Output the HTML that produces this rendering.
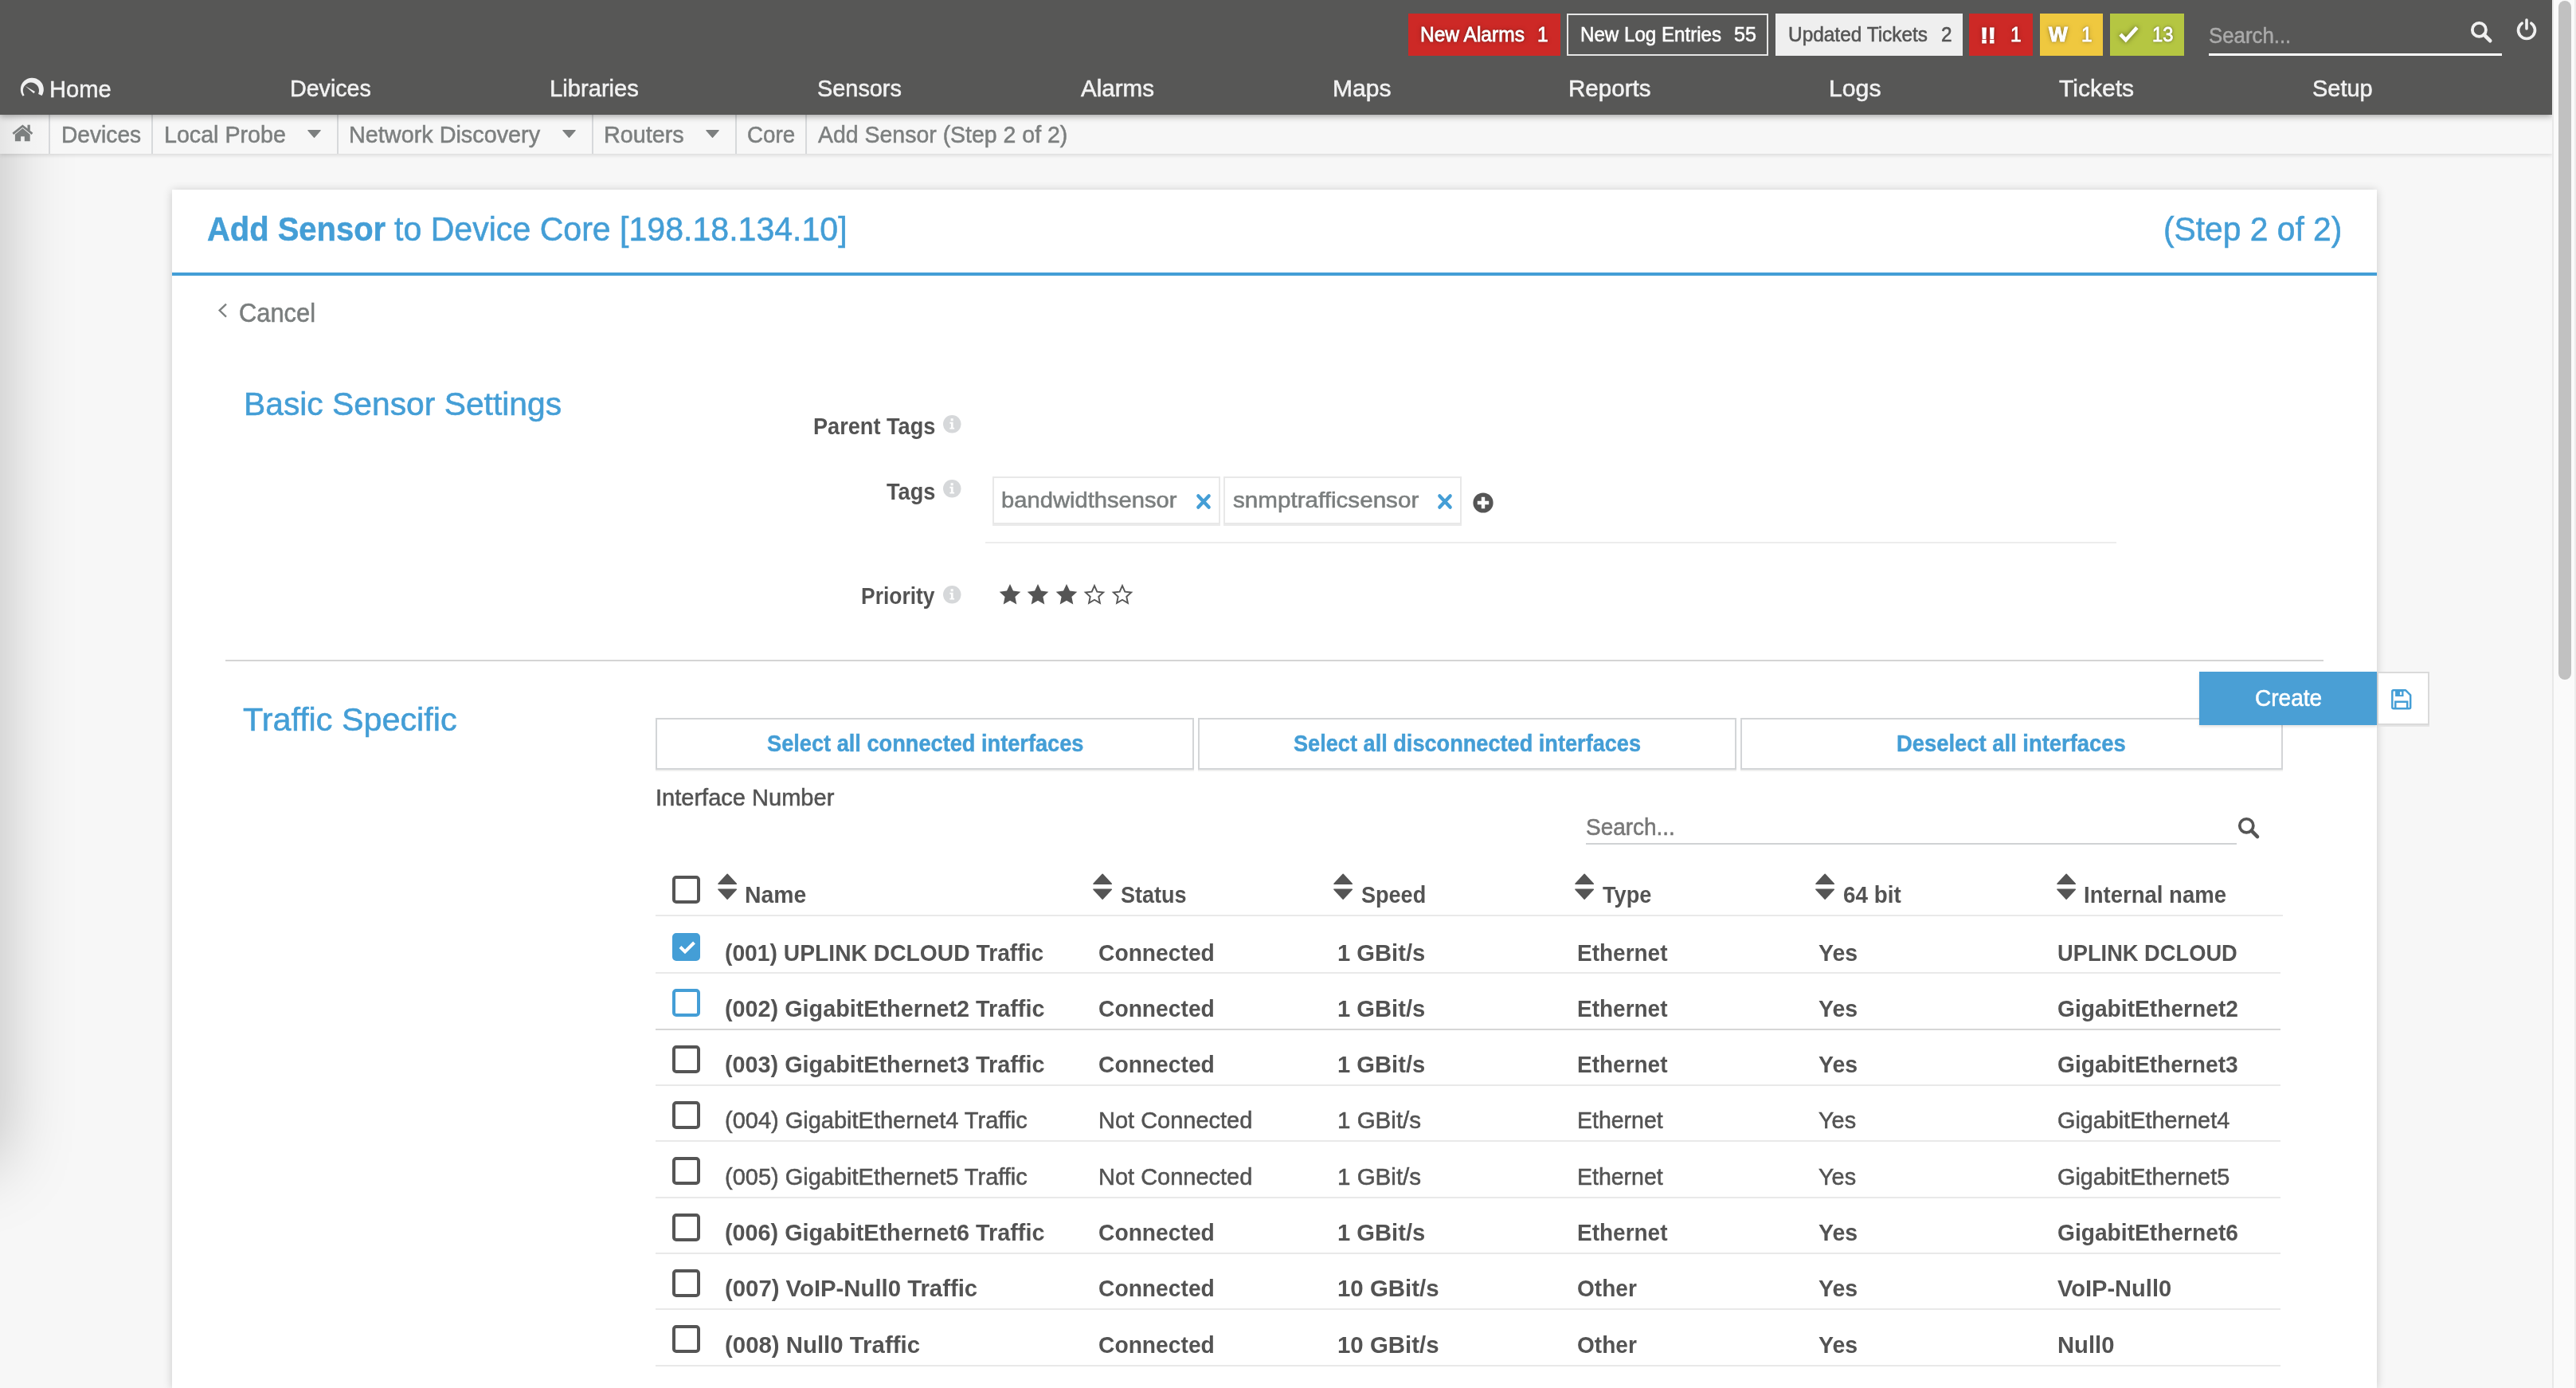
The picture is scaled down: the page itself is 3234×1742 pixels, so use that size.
<!DOCTYPE html>
<html lang="en"><head><meta charset="utf-8"><title>Add Sensor | PRTG Network Monitor</title>
<style>
html,body{margin:0;padding:0;overflow:hidden}
html{width:3234px;height:1742px}
body{width:3234px;height:1742px;overflow:hidden;position:relative;background:#f7f7f7;font-family:"Liberation Sans",sans-serif}
.t{position:absolute;white-space:pre;line-height:1;transform-origin:0 0;font-family:"Liberation Sans",sans-serif}
.a{position:absolute}
#leftshade{left:-200px;top:-100px;width:200px;height:1560px;box-shadow:0 0 90px rgba(0,0,0,.25)}
#hdr{left:0;top:0;width:3204px;height:144px;background:#575756;box-shadow:0 2px 8px rgba(0,0,0,.35)}
#crumbs{left:0;top:144px;width:3204px;height:49px;background:linear-gradient(to right,rgba(0,0,0,.07),rgba(0,0,0,.025) 30px,rgba(0,0,0,0) 70px) #f7f7f7;box-shadow:0 2px 5px rgba(0,0,0,.12)}
.sep{position:absolute;top:144px;width:2px;height:49px;background:#d7d9db}
#sb{left:3204px;top:0;width:26px;height:1742px;background:#fafafa;border-left:2px solid #e8e8e8;border-right:2px solid #ececec}
#thumb{left:3212px;top:1px;width:16px;height:852px;border-radius:8px;background:#c1c1c1}
#card{left:216px;top:238px;width:2768px;height:1504px;background:#fff;box-shadow:0 1px 11px rgba(0,0,0,.19)}
#blueline{left:216px;top:342px;width:2768px;height:4px;background:#449ed6}
.badge{position:absolute;top:17px;height:53px}
.hl{position:absolute;height:2px;background:#e9e9e9}
.btn{position:absolute;top:901px;height:61px;border:2px solid #d3d5d7;background:#fff;box-shadow:0 2px 0 #efefef}
.tag{position:absolute;top:598px;height:56px;border:2px solid #e8e8e8;background:#fff;box-shadow:0 2px 0 #ebebeb}
.cb{position:absolute;left:844px;width:27px;height:27px;border:4px solid #555;border-radius:5px;background:#fff}
svg{position:absolute;overflow:visible}

</style></head>
<body>
<div class="a" id="leftshade"></div>
<div class="a" id="card"></div>
<div class="a" id="blueline"></div>
<div class="a" id="crumbs"></div>
<div class="sep" style="left:61px"></div><div class="sep" style="left:190px"></div><div class="sep" style="left:423px"></div><div class="sep" style="left:743px"></div><div class="sep" style="left:923px"></div><div class="sep" style="left:1011px"></div>
<div class="a" id="hdr"></div>
<div class="a" id="sb"></div><div class="a" id="thumb"></div>

<!-- badges -->
<div class="badge" style="left:1768px;width:191px;background:#cd2926"></div>
<div class="badge" style="left:1967px;width:249px;height:49px;border:2px solid #e6e6e6"></div>
<div class="badge" style="left:2229px;width:235px;background:#efefef"></div>
<div class="badge" style="left:2472px;width:80px;background:#cd2926"></div>
<div class="badge" style="left:2561px;width:79px;background:#efc83f"></div>
<div class="badge" style="left:2649px;width:93px;background:#b5c642"></div>
<div class="a" style="left:2773px;top:67.4px;width:368px;height:2.8px;background:#fff"></div>
<div class="t" style="left:2486.3px;top:29.9px;font-size:28.5px;font-weight:700;color:#fff;letter-spacing:-0.4px;transform:scaleX(1.07);-webkit-text-stroke:1.1px #fff;text-shadow:0 0 3px rgba(0,0,0,.5),0 0 6px rgba(0,0,0,.35)">!!</div>
<!-- green check -->
<svg style="left:2659px;top:31px;filter:drop-shadow(0 0 3px rgba(0,0,0,.5))" width="27" height="23" viewBox="0 0 27 23"><path d="M3 12.2 L9.8 19.2 L23.8 3.6" fill="none" stroke="#fff" stroke-width="4.6" stroke-linecap="butt" stroke-linejoin="miter"/></svg>
<!-- header search icon -->
<svg style="left:3101px;top:26px" width="28.5" height="28.5" viewBox="0 0 30 30"><circle cx="12" cy="12" r="9" fill="none" stroke="#f0f0f0" stroke-width="4"/><path d="M18.5 18.5 L26.5 26.5" stroke="#f0f0f0" stroke-width="5" stroke-linecap="round"/></svg>
<!-- power icon -->
<svg style="left:3158px;top:23px" width="28" height="28" viewBox="0 0 28 28"><path d="M8.2 6.2 A10.5 10.5 0 1 0 19.8 6.2" fill="none" stroke="#f0f0f0" stroke-width="3.6" stroke-linecap="round"/><path d="M14 2 L14 13" stroke="#f0f0f0" stroke-width="3.6" stroke-linecap="round"/></svg>
<!-- home gauge icon -->
<svg style="left:25px;top:97px" width="31" height="25" viewBox="0 0 31 25"><path d="M3.6 23.7 A14.5 14.5 0 1 1 27.5 23 L23.1 20.9 A10.1 10.1 0 1 0 5.6 22.4 Z" fill="#f0f0f0"/><path d="M6.8 11 L19 18.1 L17.4 20.3 Z" fill="#f0f0f0"/></svg>
<!-- breadcrumb home -->
<svg style="left:15px;top:156px" width="27" height="22" viewBox="0 0 27 22"><path d="M13.4 5 L3.9 12.8 V21.3 H11.1 V15.2 H15.8 V21.3 H22.7 V12.8 Z" fill="#7c7f7f"/><path d="M1.3 11.9 L13.4 2.2 L25.5 11.9" fill="none" stroke="#7c7f7f" stroke-width="2.7" stroke-linejoin="miter"/><rect x="19.5" y="0.7" width="3.3" height="7" fill="#7c7f7f"/></svg>
<!-- carets -->
<svg style="left:386.1px;top:162.6px" width="17" height="10" viewBox="0 0 17 10"><path d="M0.8 0.6 H16.2 L8.5 9.4 Z" fill="#7c7f7f" stroke="#7c7f7f" stroke-width="1.2" stroke-linejoin="round"/></svg>
<svg style="left:706.2px;top:162.6px" width="17" height="10" viewBox="0 0 17 10"><path d="M0.8 0.6 H16.2 L8.5 9.4 Z" fill="#7c7f7f" stroke="#7c7f7f" stroke-width="1.2" stroke-linejoin="round"/></svg>
<svg style="left:885.7px;top:162.6px" width="17" height="10" viewBox="0 0 17 10"><path d="M0.8 0.6 H16.2 L8.5 9.4 Z" fill="#7c7f7f" stroke="#7c7f7f" stroke-width="1.2" stroke-linejoin="round"/></svg>

<!-- cancel chevron -->
<svg style="left:273px;top:380px" width="13" height="19" viewBox="0 0 13 19"><path d="M11 1.6 L2.6 9.6 L11 17.6" fill="none" stroke="#7d8181" stroke-width="2.3"/></svg>

<!-- info icons -->
<svg style="left:1183.6px;top:521px" width="22.5" height="22.5" viewBox="0 0 22 22"><circle cx="11" cy="11" r="11" fill="#d6d8da"/><path d="M8.2 8.6 H12.3 V15.4 H13.8 V17.2 H8.2 V15.4 H9.7 V10.4 H8.2 Z M9.4 4.2 H12.4 V7 H9.4 Z" fill="#fff"/></svg>
<svg style="left:1183.6px;top:602px" width="22.5" height="22.5" viewBox="0 0 22 22"><circle cx="11" cy="11" r="11" fill="#d6d8da"/><path d="M8.2 8.6 H12.3 V15.4 H13.8 V17.2 H8.2 V15.4 H9.7 V10.4 H8.2 Z M9.4 4.2 H12.4 V7 H9.4 Z" fill="#fff"/></svg>
<svg style="left:1183.6px;top:734.5px" width="22.5" height="22.5" viewBox="0 0 22 22"><circle cx="11" cy="11" r="11" fill="#d6d8da"/><path d="M8.2 8.6 H12.3 V15.4 H13.8 V17.2 H8.2 V15.4 H9.7 V10.4 H8.2 Z M9.4 4.2 H12.4 V7 H9.4 Z" fill="#fff"/></svg>

<!-- tags -->
<div class="tag" style="left:1246px;width:282px"></div>
<div class="tag" style="left:1536px;width:295px"></div>
<svg style="left:1502.4px;top:620.2px" width="18" height="19" viewBox="0 0 18 18" preserveAspectRatio="none"><path d="M2.3 2.3 L15.7 15.7 M15.7 2.3 L2.3 15.7" stroke="#449ed6" stroke-width="4.2" stroke-linecap="round" fill="none"/></svg>
<svg style="left:1805.2px;top:620.2px" width="18" height="19" viewBox="0 0 18 18" preserveAspectRatio="none"><path d="M2.3 2.3 L15.7 15.7 M15.7 2.3 L2.3 15.7" stroke="#449ed6" stroke-width="4.2" stroke-linecap="round" fill="none"/></svg>
<svg style="left:1849px;top:618px" width="26" height="26" viewBox="0 0 26 26"><circle cx="13" cy="13" r="12.6" fill="#555"/><path d="M13 5.8 V20.2 M5.8 13 H20.2" stroke="#fff" stroke-width="4.4"/></svg>
<div class="hl" style="left:1237px;top:680px;width:1420px;background:#ededed"></div>

<!-- stars -->
<svg style="left:1254px;top:732px" width="28" height="27" viewBox="0 0 28 27"><path id="st" d="M14 1 L18 9.6 L27.3 10.7 L20.4 17.1 L22.3 26.4 L14 21.7 L5.7 26.4 L7.6 17.1 L0.7 10.7 L10 9.6 Z" fill="#555"/></svg>
<svg style="left:1289.3px;top:732px" width="28" height="27" viewBox="0 0 28 27"><path d="M14 1 L18 9.6 L27.3 10.7 L20.4 17.1 L22.3 26.4 L14 21.7 L5.7 26.4 L7.6 17.1 L0.7 10.7 L10 9.6 Z" fill="#555"/></svg>
<svg style="left:1324.6px;top:732px" width="28" height="27" viewBox="0 0 28 27"><path d="M14 1 L18 9.6 L27.3 10.7 L20.4 17.1 L22.3 26.4 L14 21.7 L5.7 26.4 L7.6 17.1 L0.7 10.7 L10 9.6 Z" fill="#555"/></svg>
<svg style="left:1360px;top:732px" width="28" height="27" viewBox="0 0 28 27"><path d="M14 3.2 L17.3 10.6 L25.2 11.5 L19.3 16.9 L20.9 24.8 L14 20.8 L7.1 24.8 L8.7 16.9 L2.8 11.5 L10.7 10.6 Z" fill="#fff" stroke="#555" stroke-width="1.9" stroke-linejoin="miter"/></svg>
<svg style="left:1395.3px;top:732px" width="28" height="27" viewBox="0 0 28 27"><path d="M14 3.2 L17.3 10.6 L25.2 11.5 L19.3 16.9 L20.9 24.8 L14 20.8 L7.1 24.8 L8.7 16.9 L2.8 11.5 L10.7 10.6 Z" fill="#fff" stroke="#555" stroke-width="1.9" stroke-linejoin="miter"/></svg>

<!-- section divider -->
<div class="hl" style="left:283px;top:828px;width:2634px;background:#d4d4d4"></div>

<!-- buttons -->
<div class="btn" style="left:823px;width:672px"></div>
<div class="btn" style="left:1504px;width:672px"></div>
<div class="btn" style="left:2185px;width:677px"></div>
<!-- create -->
<div class="a" style="left:2984px;top:843px;width:62px;height:63px;background:#fff;border:2px solid #dadada;box-shadow:0 2px 0 #e4e4e4"></div>
<div class="a" style="left:2761px;top:843px;width:223px;height:67px;background:#4a9fd5;box-shadow:0 2px 3px rgba(0,0,0,.12)"></div>
<svg style="left:3001.5px;top:865px" width="25.5" height="25.5" viewBox="0 0 27 27"><path d="M3 1.4 H19.2 L25.6 7.8 V24 Q25.6 25.6 24 25.6 H3 Q1.4 25.6 1.4 24 V3 Q1.4 1.4 3 1.4 Z" fill="none" stroke="#449ed6" stroke-width="2.6" stroke-linejoin="round"/><path d="M5.4 2 H16.4 V9.6 H5.4 Z" fill="#449ed6"/><path d="M11.6 3.4 H14 V7.6 H11.6 Z" fill="#fff"/><path d="M5.6 25 V16.6 H21.4 V25" fill="none" stroke="#449ed6" stroke-width="2.6"/></svg>

<!-- table search -->
<div class="hl" style="left:1991px;top:1058px;width:817px;background:#d0d2d4"></div>
<svg style="left:2808.5px;top:1025px" width="27.5" height="27.5" viewBox="0 0 28 28"><circle cx="11.5" cy="11.5" r="8.7" fill="none" stroke="#555" stroke-width="3.8"/><path d="M18 18 L25.5 25.5" stroke="#555" stroke-width="4.6" stroke-linecap="round"/></svg>


<!-- table -->
<svg style="left:900.7px;top:1096.3px" width="24.3" height="33.4" viewBox="0 0 24.3 33.4"><path d="M12.15 1.3 L23.3 13.2 H1 Z M1 20.2 H23.3 L12.15 32.1 Z" fill="#555" stroke="#555" stroke-width="1.6" stroke-linejoin="round"/></svg>
<svg style="left:1371.8px;top:1096.3px" width="24.3" height="33.4" viewBox="0 0 24.3 33.4"><path d="M12.15 1.3 L23.3 13.2 H1 Z M1 20.2 H23.3 L12.15 32.1 Z" fill="#555" stroke="#555" stroke-width="1.6" stroke-linejoin="round"/></svg>
<svg style="left:1673.8px;top:1096.3px" width="24.3" height="33.4" viewBox="0 0 24.3 33.4"><path d="M12.15 1.3 L23.3 13.2 H1 Z M1 20.2 H23.3 L12.15 32.1 Z" fill="#555" stroke="#555" stroke-width="1.6" stroke-linejoin="round"/></svg>
<svg style="left:1976.7px;top:1096.3px" width="24.3" height="33.4" viewBox="0 0 24.3 33.4"><path d="M12.15 1.3 L23.3 13.2 H1 Z M1 20.2 H23.3 L12.15 32.1 Z" fill="#555" stroke="#555" stroke-width="1.6" stroke-linejoin="round"/></svg>
<svg style="left:2279px;top:1096.3px" width="24.3" height="33.4" viewBox="0 0 24.3 33.4"><path d="M12.15 1.3 L23.3 13.2 H1 Z M1 20.2 H23.3 L12.15 32.1 Z" fill="#555" stroke="#555" stroke-width="1.6" stroke-linejoin="round"/></svg>
<svg style="left:2581.7px;top:1096.3px" width="24.3" height="33.4" viewBox="0 0 24.3 33.4"><path d="M12.15 1.3 L23.3 13.2 H1 Z M1 20.2 H23.3 L12.15 32.1 Z" fill="#555" stroke="#555" stroke-width="1.6" stroke-linejoin="round"/></svg>
<div class="hl" style="left:823px;top:1148px;width:2043px"></div>
<div class="hl" style="left:823px;top:1220.1px;width:2040px;background:#e9e9e9"></div>
<div class="hl" style="left:823px;top:1290.5px;width:2040px;background:#d6d6d6"></div>
<div class="hl" style="left:823px;top:1360.8px;width:2040px;background:#e9e9e9"></div>
<div class="hl" style="left:823px;top:1431.2px;width:2040px;background:#e9e9e9"></div>
<div class="hl" style="left:823px;top:1501.5px;width:2040px;background:#e9e9e9"></div>
<div class="hl" style="left:823px;top:1571.9px;width:2040px;background:#e9e9e9"></div>
<div class="hl" style="left:823px;top:1642.3px;width:2040px;background:#e9e9e9"></div>
<div class="hl" style="left:823px;top:1712.6px;width:2040px;background:#e9e9e9"></div>
<div class="cb" style="top:1099px"></div>
<div class="cb" style="top:1170.9px;border-color:#449ed6;background:#449ed6"></div>
<svg style="left:852px;top:1179.9px" width="22" height="18" viewBox="0 0 22 18"><path d="M2 8.5 L8 14.5 L19.5 3" fill="none" stroke="#fff" stroke-width="4"/></svg>
<div class="cb" style="top:1241.2px;border-color:#449ed6"></div>
<div class="cb" style="top:1311.6px"></div>
<div class="cb" style="top:1381.9px"></div>
<div class="cb" style="top:1452.3px"></div>
<div class="cb" style="top:1522.6px"></div>
<div class="cb" style="top:1592.9px"></div>
<div class="cb" style="top:1663.3px"></div>

<div class="t" style="left:62.0px;top:97.2px;font-size:30px;font-weight:400;color:#f2f2f2;transform:scaleX(0.9710);-webkit-text-stroke:0.55px;">Home</div>
<div class="t" style="left:364.1px;top:95.5px;font-size:30px;font-weight:400;color:#f2f2f2;transform:scaleX(0.9547);-webkit-text-stroke:0.55px;">Devices</div>
<div class="t" style="left:690.1px;top:95.5px;font-size:30px;font-weight:400;color:#f2f2f2;transform:scaleX(0.9728);-webkit-text-stroke:0.55px;">Libraries</div>
<div class="t" style="left:1026.0px;top:95.5px;font-size:30px;font-weight:400;color:#f2f2f2;transform:scaleX(0.9625);-webkit-text-stroke:0.55px;">Sensors</div>
<div class="t" style="left:1356.5px;top:95.5px;font-size:30px;font-weight:400;color:#f2f2f2;transform:scaleX(0.9855);-webkit-text-stroke:0.55px;">Alarms</div>
<div class="t" style="left:1672.5px;top:95.5px;font-size:30px;font-weight:400;color:#f2f2f2;transform:scaleX(1.0020);-webkit-text-stroke:0.55px;">Maps</div>
<div class="t" style="left:1969.0px;top:95.5px;font-size:30px;font-weight:400;color:#f2f2f2;transform:scaleX(0.9849);-webkit-text-stroke:0.55px;">Reports</div>
<div class="t" style="left:2295.5px;top:95.5px;font-size:30px;font-weight:400;color:#f2f2f2;transform:scaleX(1.0072);-webkit-text-stroke:0.55px;">Logs</div>
<div class="t" style="left:2585.0px;top:95.5px;font-size:30px;font-weight:400;color:#f2f2f2;transform:scaleX(1.0011);-webkit-text-stroke:0.55px;">Tickets</div>
<div class="t" style="left:2903.0px;top:95.5px;font-size:30px;font-weight:400;color:#f2f2f2;transform:scaleX(0.9646);-webkit-text-stroke:0.55px;">Setup</div>
<div class="t" style="left:1782.8px;top:30.6px;font-size:25px;font-weight:400;color:#ffffff;transform:scaleX(0.9815);-webkit-text-stroke:0.55px;text-shadow:0 0 3px rgba(0,0,0,.5),0 0 6px rgba(0,0,0,.35);-webkit-text-stroke:0.8px;">New Alarms</div>
<div class="t" style="left:1930.4px;top:30.6px;font-size:25px;font-weight:400;color:#ffffff;transform:scaleX(0.9760);-webkit-text-stroke:0.55px;text-shadow:0 0 3px rgba(0,0,0,.5),0 0 6px rgba(0,0,0,.35);-webkit-text-stroke:0.8px;">1</div>
<div class="t" style="left:1984.1px;top:30.6px;font-size:25px;font-weight:400;color:#ffffff;transform:scaleX(0.9651);-webkit-text-stroke:0.55px;">New Log Entries</div>
<div class="t" style="left:2177.3px;top:30.6px;font-size:25px;font-weight:400;color:#ffffff;transform:scaleX(1.0076);-webkit-text-stroke:0.55px;">55</div>
<div class="t" style="left:2244.6px;top:30.6px;font-size:25px;font-weight:400;color:#555555;transform:scaleX(0.9764);-webkit-text-stroke:0.55px;">Updated Tickets</div>
<div class="t" style="left:2436.9px;top:30.6px;font-size:25px;font-weight:400;color:#555555;transform:scaleX(0.9760);-webkit-text-stroke:0.55px;">2</div>
<div class="t" style="left:2523.7px;top:30.6px;font-size:25px;font-weight:400;color:#ffffff;transform:scaleX(0.9760);-webkit-text-stroke:0.55px;text-shadow:0 0 3px rgba(0,0,0,.5),0 0 6px rgba(0,0,0,.35);-webkit-text-stroke:0.8px;">1</div>
<div class="t" style="left:2571.8px;top:30.6px;font-size:25px;font-weight:700;color:#ffffff;transform:scaleX(1.0083);text-shadow:0 0 3px rgba(0,0,0,.5),0 0 6px rgba(0,0,0,.35);-webkit-text-stroke:0.8px;-webkit-text-stroke:1px #fff;">W</div>
<div class="t" style="left:2613.1px;top:30.6px;font-size:25px;font-weight:400;color:#ffffff;transform:scaleX(0.9760);-webkit-text-stroke:0.55px;text-shadow:0 0 3px rgba(0,0,0,.5),0 0 6px rgba(0,0,0,.35);-webkit-text-stroke:0.8px;">1</div>
<div class="t" style="left:2702.3px;top:30.6px;font-size:25px;font-weight:400;color:#ffffff;transform:scaleX(0.9497);-webkit-text-stroke:0.55px;text-shadow:0 0 3px rgba(0,0,0,.5),0 0 6px rgba(0,0,0,.35);-webkit-text-stroke:0.8px;">13</div>
<div class="t" style="left:2772.7px;top:30.0px;font-size:28.5px;font-weight:400;color:#aaaaaa;transform:scaleX(0.9052);-webkit-text-stroke:0.55px;">Search...</div>
<div class="t" style="left:76.8px;top:153.5px;font-size:30px;font-weight:400;color:#7c7f7f;transform:scaleX(0.9383);-webkit-text-stroke:0.55px;">Devices</div>
<div class="t" style="left:205.5px;top:153.5px;font-size:30px;font-weight:400;color:#7c7f7f;transform:scaleX(0.9548);-webkit-text-stroke:0.55px;">Local Probe</div>
<div class="t" style="left:437.8px;top:153.5px;font-size:30px;font-weight:400;color:#7c7f7f;transform:scaleX(0.9603);-webkit-text-stroke:0.55px;">Network Discovery</div>
<div class="t" style="left:757.5px;top:153.5px;font-size:30px;font-weight:400;color:#7c7f7f;transform:scaleX(0.9584);-webkit-text-stroke:0.55px;">Routers</div>
<div class="t" style="left:937.8px;top:153.5px;font-size:30px;font-weight:400;color:#7c7f7f;transform:scaleX(0.9252);-webkit-text-stroke:0.55px;">Core</div>
<div class="t" style="left:1027.2px;top:153.5px;font-size:30px;font-weight:400;color:#7c7f7f;transform:scaleX(0.9487);-webkit-text-stroke:0.55px;">Add Sensor (Step 2 of 2)</div>
<div class="t" style="left:259.5px;top:267.4px;font-size:42px;font-weight:700;color:#449ed6;transform:scaleX(0.9507);-webkit-text-stroke:0.5px;">Add Sensor</div>
<div class="t" style="left:495.0px;top:267.4px;font-size:42px;font-weight:400;color:#449ed6;transform:scaleX(0.9780);-webkit-text-stroke:0.55px;">to Device Core [198.18.134.10]</div>
<div class="t" style="left:2716.0px;top:267.4px;font-size:42px;font-weight:400;color:#449ed6;transform:scaleX(0.9708);-webkit-text-stroke:0.55px;">(Step 2 of 2)</div>
<div class="t" style="left:300.4px;top:375.9px;font-size:33px;font-weight:400;color:#7a7e7e;transform:scaleX(0.9353);-webkit-text-stroke:0.55px;">Cancel</div>
<div class="t" style="left:305.5px;top:487.2px;font-size:40.5px;font-weight:400;color:#449ed6;transform:scaleX(1.0073);-webkit-text-stroke:0.55px;">Basic Sensor Settings</div>
<div class="t" style="left:305.2px;top:882.6px;font-size:40.5px;font-weight:400;color:#449ed6;transform:scaleX(1.0198);-webkit-text-stroke:0.55px;">Traffic Specific</div>
<div class="t" style="left:1020.5px;top:521.1px;font-size:29px;font-weight:700;color:#535353;transform:scaleX(0.9362);">Parent Tags</div>
<div class="t" style="left:1112.5px;top:602.6px;font-size:29px;font-weight:700;color:#535353;transform:scaleX(0.9363);">Tags</div>
<div class="t" style="left:1080.8px;top:733.8px;font-size:29px;font-weight:700;color:#535353;transform:scaleX(0.9114);">Priority</div>
<div class="t" style="left:1257.2px;top:613.2px;font-size:28.5px;font-weight:400;color:#7a7e7e;transform:scaleX(1.0233);-webkit-text-stroke:0.55px;">bandwidthsensor</div>
<div class="t" style="left:1547.7px;top:613.2px;font-size:28.5px;font-weight:400;color:#7a7e7e;transform:scaleX(1.0395);-webkit-text-stroke:0.55px;">snmptrafficsensor</div>
<div class="t" style="left:962.7px;top:918.0px;font-size:29.5px;font-weight:700;color:#449ed6;transform:scaleX(0.9218);-webkit-text-stroke:0.45px;">Select all connected interfaces</div>
<div class="t" style="left:1624.3px;top:918.0px;font-size:29.5px;font-weight:700;color:#449ed6;transform:scaleX(0.9203);-webkit-text-stroke:0.45px;">Select all disconnected interfaces</div>
<div class="t" style="left:2381.3px;top:918.0px;font-size:29.5px;font-weight:700;color:#449ed6;transform:scaleX(0.9286);-webkit-text-stroke:0.45px;">Deselect all interfaces</div>
<div class="t" style="left:2830.8px;top:860.5px;font-size:30px;font-weight:400;color:#ffffff;transform:scaleX(0.9337);-webkit-text-stroke:0.55px;">Create</div>
<div class="t" style="left:823.0px;top:985.5px;font-size:30px;font-weight:400;color:#535353;transform:scaleX(0.9679);-webkit-text-stroke:0.55px;">Interface Number</div>
<div class="t" style="left:1990.9px;top:1022.6px;font-size:30px;font-weight:400;color:#777777;transform:scaleX(0.9313);-webkit-text-stroke:0.55px;">Search...</div>
<div class="t" style="left:934.6px;top:1107.8px;font-size:30px;font-weight:700;color:#535353;transform:scaleX(0.9465);">Name</div>
<div class="t" style="left:1406.5px;top:1107.8px;font-size:30px;font-weight:700;color:#535353;transform:scaleX(0.9011);">Status</div>
<div class="t" style="left:1709.0px;top:1107.8px;font-size:30px;font-weight:700;color:#535353;transform:scaleX(0.9019);">Speed</div>
<div class="t" style="left:2012.0px;top:1107.8px;font-size:30px;font-weight:700;color:#535353;transform:scaleX(0.9045);">Type</div>
<div class="t" style="left:2313.8px;top:1107.8px;font-size:30px;font-weight:700;color:#535353;transform:scaleX(0.9281);">64 bit</div>
<div class="t" style="left:2615.7px;top:1107.8px;font-size:30px;font-weight:700;color:#535353;transform:scaleX(0.9175);">Internal name</div>
<div class="t" style="left:909.7px;top:1180.5px;font-size:30px;font-weight:700;color:#535353;transform:scaleX(0.9416);">(001) UPLINK DCLOUD Traffic</div>
<div class="t" style="left:1378.6px;top:1180.5px;font-size:30px;font-weight:700;color:#535353;transform:scaleX(0.9409);">Connected</div>
<div class="t" style="left:1679.4px;top:1180.5px;font-size:30px;font-weight:700;color:#535353;transform:scaleX(0.9727);">1 GBit/s</div>
<div class="t" style="left:1980.2px;top:1180.5px;font-size:30px;font-weight:700;color:#535353;transform:scaleX(0.9327);">Ethernet</div>
<div class="t" style="left:2282.5px;top:1180.5px;font-size:30px;font-weight:700;color:#535353;transform:scaleX(0.9503);">Yes</div>
<div class="t" style="left:2583.2px;top:1180.5px;font-size:30px;font-weight:700;color:#535353;transform:scaleX(0.9093);">UPLINK DCLOUD</div>
<div class="t" style="left:909.7px;top:1250.8px;font-size:30px;font-weight:700;color:#535353;transform:scaleX(0.9594);">(002) GigabitEthernet2 Traffic</div>
<div class="t" style="left:1378.6px;top:1250.8px;font-size:30px;font-weight:700;color:#535353;transform:scaleX(0.9409);">Connected</div>
<div class="t" style="left:1679.4px;top:1250.8px;font-size:30px;font-weight:700;color:#535353;transform:scaleX(0.9727);">1 GBit/s</div>
<div class="t" style="left:1980.2px;top:1250.8px;font-size:30px;font-weight:700;color:#535353;transform:scaleX(0.9327);">Ethernet</div>
<div class="t" style="left:2282.5px;top:1250.8px;font-size:30px;font-weight:700;color:#535353;transform:scaleX(0.9503);">Yes</div>
<div class="t" style="left:2583.2px;top:1250.8px;font-size:30px;font-weight:700;color:#535353;transform:scaleX(0.9389);">GigabitEthernet2</div>
<div class="t" style="left:909.7px;top:1321.1px;font-size:30px;font-weight:700;color:#535353;transform:scaleX(0.9594);">(003) GigabitEthernet3 Traffic</div>
<div class="t" style="left:1378.6px;top:1321.1px;font-size:30px;font-weight:700;color:#535353;transform:scaleX(0.9409);">Connected</div>
<div class="t" style="left:1679.4px;top:1321.1px;font-size:30px;font-weight:700;color:#535353;transform:scaleX(0.9727);">1 GBit/s</div>
<div class="t" style="left:1980.2px;top:1321.1px;font-size:30px;font-weight:700;color:#535353;transform:scaleX(0.9327);">Ethernet</div>
<div class="t" style="left:2282.5px;top:1321.1px;font-size:30px;font-weight:700;color:#535353;transform:scaleX(0.9503);">Yes</div>
<div class="t" style="left:2583.2px;top:1321.1px;font-size:30px;font-weight:700;color:#535353;transform:scaleX(0.9381);">GigabitEthernet3</div>
<div class="t" style="left:909.7px;top:1391.4px;font-size:30px;font-weight:400;color:#535353;transform:scaleX(0.9664);-webkit-text-stroke:0.55px;">(004) GigabitEthernet4 Traffic</div>
<div class="t" style="left:1378.6px;top:1391.4px;font-size:30px;font-weight:400;color:#535353;transform:scaleX(0.9660);-webkit-text-stroke:0.55px;">Not Connected</div>
<div class="t" style="left:1679.4px;top:1391.4px;font-size:30px;font-weight:400;color:#535353;transform:scaleX(0.9849);-webkit-text-stroke:0.55px;">1 GBit/s</div>
<div class="t" style="left:1980.2px;top:1391.4px;font-size:30px;font-weight:400;color:#535353;transform:scaleX(0.9494);-webkit-text-stroke:0.55px;">Ethernet</div>
<div class="t" style="left:2282.5px;top:1391.4px;font-size:30px;font-weight:400;color:#535353;transform:scaleX(0.9616);-webkit-text-stroke:0.55px;">Yes</div>
<div class="t" style="left:2583.2px;top:1391.4px;font-size:30px;font-weight:400;color:#535353;transform:scaleX(0.9601);-webkit-text-stroke:0.55px;">GigabitEthernet4</div>
<div class="t" style="left:909.7px;top:1461.7px;font-size:30px;font-weight:400;color:#535353;transform:scaleX(0.9664);-webkit-text-stroke:0.55px;">(005) GigabitEthernet5 Traffic</div>
<div class="t" style="left:1378.6px;top:1461.7px;font-size:30px;font-weight:400;color:#535353;transform:scaleX(0.9660);-webkit-text-stroke:0.55px;">Not Connected</div>
<div class="t" style="left:1679.4px;top:1461.7px;font-size:30px;font-weight:400;color:#535353;transform:scaleX(0.9849);-webkit-text-stroke:0.55px;">1 GBit/s</div>
<div class="t" style="left:1980.2px;top:1461.7px;font-size:30px;font-weight:400;color:#535353;transform:scaleX(0.9494);-webkit-text-stroke:0.55px;">Ethernet</div>
<div class="t" style="left:2282.5px;top:1461.7px;font-size:30px;font-weight:400;color:#535353;transform:scaleX(0.9616);-webkit-text-stroke:0.55px;">Yes</div>
<div class="t" style="left:2583.2px;top:1461.7px;font-size:30px;font-weight:400;color:#535353;transform:scaleX(0.9601);-webkit-text-stroke:0.55px;">GigabitEthernet5</div>
<div class="t" style="left:909.7px;top:1532.0px;font-size:30px;font-weight:700;color:#535353;transform:scaleX(0.9594);">(006) GigabitEthernet6 Traffic</div>
<div class="t" style="left:1378.6px;top:1532.0px;font-size:30px;font-weight:700;color:#535353;transform:scaleX(0.9409);">Connected</div>
<div class="t" style="left:1679.4px;top:1532.0px;font-size:30px;font-weight:700;color:#535353;transform:scaleX(0.9727);">1 GBit/s</div>
<div class="t" style="left:1980.2px;top:1532.0px;font-size:30px;font-weight:700;color:#535353;transform:scaleX(0.9327);">Ethernet</div>
<div class="t" style="left:2282.5px;top:1532.0px;font-size:30px;font-weight:700;color:#535353;transform:scaleX(0.9503);">Yes</div>
<div class="t" style="left:2583.2px;top:1532.0px;font-size:30px;font-weight:700;color:#535353;transform:scaleX(0.9389);">GigabitEthernet6</div>
<div class="t" style="left:909.7px;top:1602.3px;font-size:30px;font-weight:700;color:#535353;transform:scaleX(0.9773);">(007) VoIP-Null0 Traffic</div>
<div class="t" style="left:1378.6px;top:1602.3px;font-size:30px;font-weight:700;color:#535353;transform:scaleX(0.9409);">Connected</div>
<div class="t" style="left:1679.4px;top:1602.3px;font-size:30px;font-weight:700;color:#535353;transform:scaleX(0.9810);">10 GBit/s</div>
<div class="t" style="left:1980.2px;top:1602.3px;font-size:30px;font-weight:700;color:#535353;transform:scaleX(0.9348);">Other</div>
<div class="t" style="left:2282.5px;top:1602.3px;font-size:30px;font-weight:700;color:#535353;transform:scaleX(0.9503);">Yes</div>
<div class="t" style="left:2583.2px;top:1602.3px;font-size:30px;font-weight:700;color:#535353;transform:scaleX(0.9687);">VoIP-Null0</div>
<div class="t" style="left:909.7px;top:1672.6px;font-size:30px;font-weight:700;color:#535353;transform:scaleX(0.9796);">(008) Null0 Traffic</div>
<div class="t" style="left:1378.6px;top:1672.6px;font-size:30px;font-weight:700;color:#535353;transform:scaleX(0.9409);">Connected</div>
<div class="t" style="left:1679.4px;top:1672.6px;font-size:30px;font-weight:700;color:#535353;transform:scaleX(0.9810);">10 GBit/s</div>
<div class="t" style="left:1980.2px;top:1672.6px;font-size:30px;font-weight:700;color:#535353;transform:scaleX(0.9348);">Other</div>
<div class="t" style="left:2282.5px;top:1672.6px;font-size:30px;font-weight:700;color:#535353;transform:scaleX(0.9503);">Yes</div>
<div class="t" style="left:2583.2px;top:1672.6px;font-size:30px;font-weight:700;color:#535353;transform:scaleX(0.9730);">Null0</div>
</body></html>
